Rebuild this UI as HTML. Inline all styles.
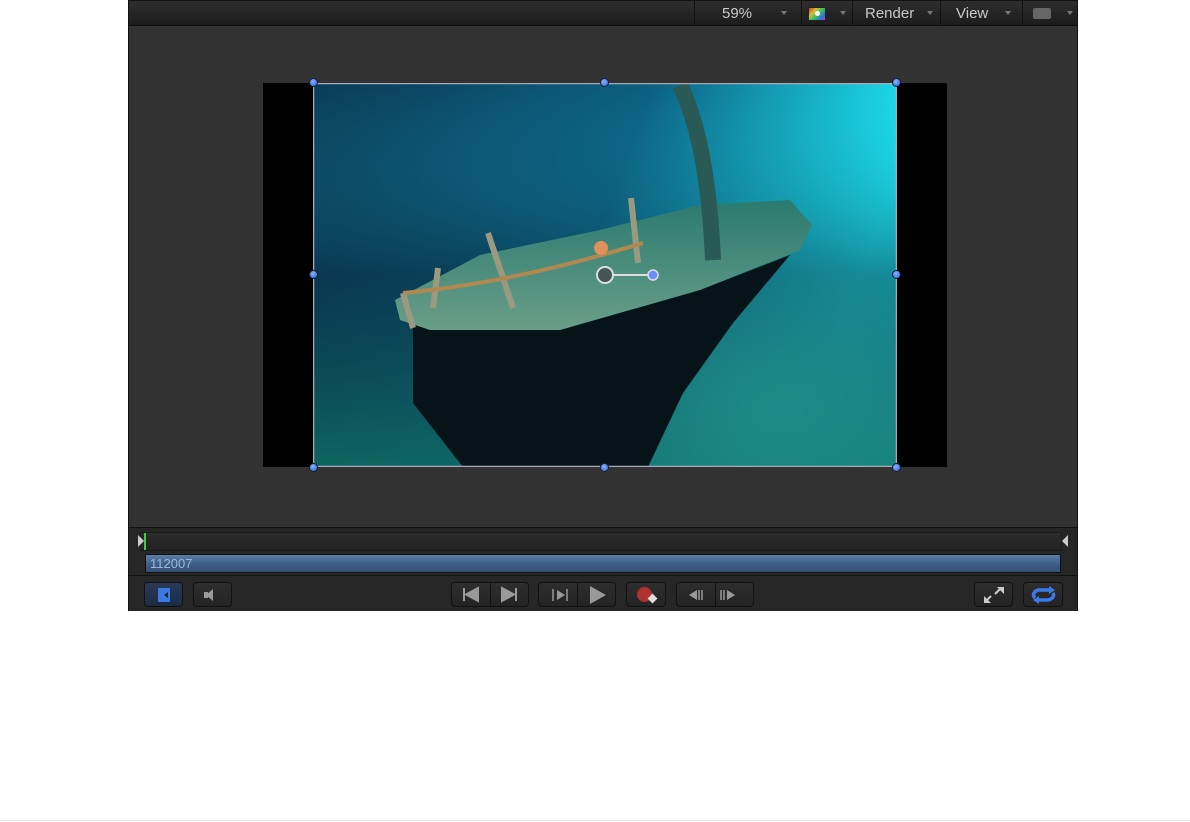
<!DOCTYPE html>
<html><head><meta charset="utf-8"><style>
*{margin:0;padding:0;box-sizing:border-box}
body{width:1190px;height:822px;background:#fff;position:relative;overflow:hidden;font-family:"Liberation Sans",sans-serif}
.app{position:absolute;left:128px;top:0;width:950px;height:611px;background:#2a2a2a;border:1px solid #111}
.tb{position:absolute;left:0;top:0;width:948px;height:25px;background:linear-gradient(#2e2e2e,#1c1c1c);border-bottom:1px solid #0c0c0c}
.tbi{position:absolute;top:0;height:25px;color:#c8c8c8;font-size:15px;line-height:25px;border-left:1px solid #111}
.ar{position:absolute;top:10px;width:0;height:0;border-left:3px solid transparent;border-right:3px solid transparent;border-top:4px solid #777}
.canvas{position:absolute;left:0;top:25px;width:948px;height:502px;background:#323232}
.btn{position:absolute;top:582px;height:25px;border:1px solid #111;border-radius:4px;background:linear-gradient(#2e2e2e,#232323)}
.h{position:absolute;width:9px;height:9px;border-radius:50%;background:radial-gradient(circle at 40% 35%,#8ab0ff,#2c5fd8);border:1px solid #123}
</style></head><body>
<div class="app">
 <div class="tb">
  <div class="tbi" style="left:565px;width:107px;border-left-color:#111"><span style="position:absolute;left:27px">59%</span><div class="ar" style="left:86px"></div></div>
  <div class="tbi" style="left:672px;width:55px"><div style="position:absolute;left:6px;top:6px;width:18px;height:14px;background:linear-gradient(135deg,#e03030,#d0c030 30%,#30c060 55%,#3070e0 80%,#c040c0);border:1px solid #222"><div style="position:absolute;left:6px;top:3px;width:5px;height:5px;border-radius:50%;background:#fff"></div></div><div class="ar" style="left:38px"></div></div>
  <div class="tbi" style="left:723px;width:88px"><span style="position:absolute;left:12px">Render</span><div class="ar" style="left:74px"></div></div>
  <div class="tbi" style="left:811px;width:82px"><span style="position:absolute;left:15px">View</span><div class="ar" style="left:64px"></div></div>
  <div class="tbi" style="left:893px;width:55px"><div style="position:absolute;left:10px;top:7px;width:18px;height:11px;background:#666;border-radius:2px"></div><div class="ar" style="left:44px"></div></div>
 </div>
 <div class="canvas"></div>
</div>
<div style="position:absolute;left:263px;top:83px;width:684px;height:384px;background:#000"></div>
<svg style="position:absolute;left:313px;top:83px" width="584" height="384" viewBox="0 0 584 384">
 <defs>
  <linearGradient id="w" x1="0" y1="0" x2="1" y2="0.25"><stop offset="0" stop-color="#0a3a55"/><stop offset="0.55" stop-color="#0c5f80"/><stop offset="1" stop-color="#1ee8f4"/></linearGradient>
  <linearGradient id="v" x1="0" y1="0" x2="0" y2="1"><stop offset="0" stop-color="#1ab0d0" stop-opacity="0"/><stop offset="0.5" stop-color="#082c40" stop-opacity="0.5"/><stop offset="1" stop-color="#0f6a60" stop-opacity="0.85"/></linearGradient>
  <radialGradient id="f" cx="0.8" cy="0.85" r="0.45"><stop offset="0" stop-color="#1f8a88"/><stop offset="1" stop-color="#1f8a88" stop-opacity="0"/></radialGradient>
  <linearGradient id="d" x1="0" y1="0" x2="0" y2="1"><stop offset="0" stop-color="#2a7a70"/><stop offset="1" stop-color="#6a9e88"/></linearGradient>
 </defs>
 <rect width="584" height="384" fill="url(#w)"/>
 <rect width="584" height="384" fill="url(#v)"/>
 <rect width="584" height="384" fill="url(#f)"/>
 <polygon points="100,242 247,247 387,207 477,172 420,240 370,310 335,384 150,384 100,320" fill="#06141a"/>
 <polygon points="82,217 167,172 287,147 387,122 477,117 499,142 487,167 387,207 247,247 117,247 87,237" fill="url(#d)"/>
 <path d="M367,2 Q395,60 400,177" stroke="#2a5a55" stroke-width="16" fill="none"/>
 <path d="M90,210 L100,245 M120,225 L125,185 M200,225 L175,150 M325,180 L318,115" stroke="#9a9a80" stroke-width="6"/>
 <path d="M90,210 Q200,200 330,160" stroke="#b08850" stroke-width="4" fill="none"/>
 <circle cx="288" cy="165" r="7" fill="#e0905a"/>
 <rect x="0.5" y="0.5" width="583" height="383" fill="none" stroke="#aab" stroke-width="1.5"/>
 <line x1="292" y1="192" x2="340" y2="192" stroke="#ddd" stroke-width="2"/>
 <circle cx="292" cy="192" r="8" fill="#455" stroke="#ddd" stroke-width="2"/>
 <circle cx="340" cy="192" r="5" fill="#6a8aff" stroke="#ddd" stroke-width="1.5"/>
</svg>
<div class="h" style="left:309px;top:78px"></div><div class="h" style="left:600px;top:78px"></div><div class="h" style="left:892px;top:78px"></div>
<div class="h" style="left:309px;top:270px"></div><div class="h" style="left:892px;top:270px"></div>
<div class="h" style="left:309px;top:463px"></div><div class="h" style="left:600px;top:463px"></div><div class="h" style="left:892px;top:463px"></div>
<div style="position:absolute;left:129px;top:527px;width:948px;height:84px;background:#262626;border-top:1px solid #111"></div>
<div style="position:absolute;left:140px;top:532px;width:922px;height:19px;background:linear-gradient(#2c2c2c,#222);border:1px solid #1a1a1a"></div>
<div style="position:absolute;left:138px;top:535px;width:0;height:0;border-top:6px solid transparent;border-bottom:6px solid transparent;border-left:6px solid #ccc"></div>
<div style="position:absolute;left:144px;top:533px;width:2px;height:17px;background:#4c4"></div>
<div style="position:absolute;left:1062px;top:535px;width:0;height:0;border-top:6px solid transparent;border-bottom:6px solid transparent;border-right:6px solid #ccc"></div>
<div style="position:absolute;left:145px;top:554px;width:916px;height:19px;background:linear-gradient(#5a7ea8,#3f6088 50%,#354f70);border:1px solid #111;color:#9ab8e0;font-size:13px;line-height:18px;padding-left:4px">112007</div>
<div style="position:absolute;left:129px;top:575px;width:948px;height:1px;background:#111"></div>
<div class="btn" style="left:144px;width:39px;background:linear-gradient(#2a3a55,#1c2a44)"><div style="position:absolute;left:13px;top:5px;width:12px;height:14px;background:#3a7ae0"></div><div style="position:absolute;left:19px;top:9px;width:0;height:0;border-top:3px solid transparent;border-bottom:3px solid transparent;border-right:4px solid #123"></div></div>
<div class="btn" style="left:193px;width:39px"><div style="position:absolute;left:10px;top:9px;width:4px;height:6px;background:#999"></div><div style="position:absolute;left:12px;top:6px;width:0;height:0;border-top:6px solid transparent;border-bottom:6px solid transparent;border-right:7px solid #999"></div></div>
<div class="btn" style="left:451px;width:78px"><span style="position:absolute;left:38px;top:0;width:1px;height:23px;background:#111"></span><svg width="78" height="24" style="position:absolute;left:0;top:0"><path d="M12,5v13M26,5l-12,6.5 12,6.5z M50,5l12,6.5-12,6.5zM64,5v13" stroke="#999" fill="#999" stroke-width="2"/></svg></div>
<div class="btn" style="left:538px;width:78px"><span style="position:absolute;left:38px;top:0;width:1px;height:23px;background:#111"></span><svg width="78" height="24" style="position:absolute;left:0;top:0"><path d="M14,6v12M28,6v12" stroke="#999" stroke-width="1.5"/><path d="M18,7l8,5-8,5z M51,3l16,9-16,9z" fill="#999"/></svg></div>
<div class="btn" style="left:626px;width:40px"><div style="position:absolute;left:10px;top:4px;width:15px;height:15px;border-radius:50%;background:#b03030"></div><div style="position:absolute;left:22px;top:12px;width:7px;height:7px;background:#ddd;transform:rotate(45deg)"></div></div>
<div class="btn" style="left:676px;width:78px"><span style="position:absolute;left:38px;top:0;width:1px;height:23px;background:#111"></span><svg width="78" height="24" style="position:absolute;left:0;top:0"><path d="M12,12l8-5v10z M50,7l8,5-8,5z" fill="#999"/><path d="M22,7v10M25,7v10M47,7v10M44,7v10" stroke="#999" stroke-width="1.5"/></svg></div>
<div class="btn" style="left:974px;width:39px"><svg width="39" height="24" style="position:absolute;left:0;top:0"><path d="M20,11l6-6M10,19l6-6" stroke="#ccc" stroke-width="2"/><path d="M22,4h7v7z M9,13v7h7z" fill="#ccc"/></svg></div>
<div class="btn" style="left:1023px;width:40px"><svg width="40" height="24" style="position:absolute;left:0;top:0"><path d="M11,15 A7,5 0 0 1 18,7h9 M29,10 A7,5 0 0 1 22,17h-9" stroke="#3a7ae8" stroke-width="3.5" fill="none"/><path d="M25,3l6,4-6,4z M15,13l-6,4 6,4z" fill="#3a7ae8"/></svg></div>
<div style="position:absolute;left:0;top:820px;width:1190px;height:1px;background:#e6e6e6"></div>
</body></html>
